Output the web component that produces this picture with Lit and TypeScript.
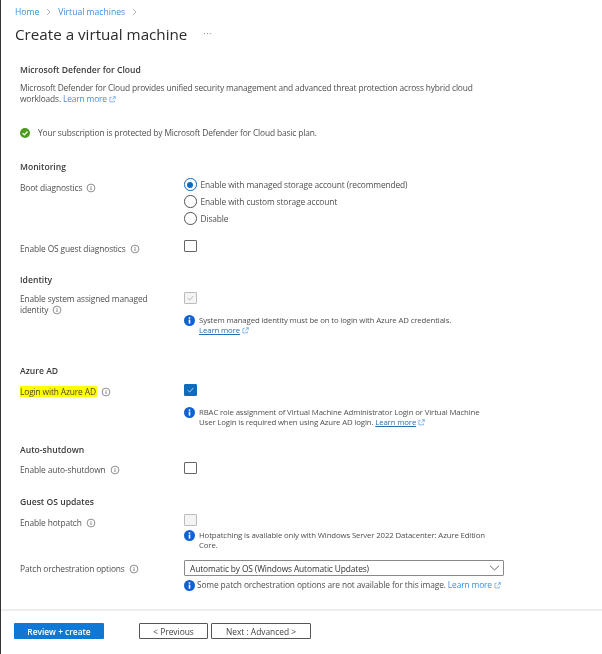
import { LitElement, html, css, svg } from "lit";
import { customElement } from "lit/decorators.js";

const info = html`<svg class="inf" viewBox="0 0 10 10"><circle cx="5" cy="5" r="3.9" fill="none" stroke="#605e5c" stroke-width=".7"/><rect x="4.6" y="4.4" width=".8" height="2.6" fill="#605e5c"/><rect x="4.6" y="3" width=".8" height=".8" fill="#605e5c"/></svg>`;
const ext = html`<svg class="ext" viewBox="0 0 8 8"><path d="M3 1.5H1v5.2h5.2V5M4.6.8h2.6v2.6M7.2.8 3.8 4.2" fill="none" stroke="currentColor" stroke-width=".7"/></svg>`;
const binfo = html`<svg class="binf" viewBox="0 0 11 11"><circle cx="5.5" cy="5.5" r="5.5" fill="#0f62d6"/><rect x="4.7" y="4.6" width="1.6" height="4" fill="#fff"/><rect x="4.7" y="2.3" width="1.6" height="1.5" fill="#fff"/></svg>`;
const check = svg`<path d="M2.6 6.2 4.9 8.4 9.4 3.6" fill="none" stroke="currentColor" stroke-width=".8"/>`;
const chev = html`<svg class="chev" viewBox="0 0 5 8"><path d="M1 1 4 4 1 7" fill="none" stroke="#999" stroke-width=".7"/></svg>`;

@customElement("app-root")
export class AppRoot extends LitElement {
  static styles = css`
    :host { display: block; width: 602px; height: 654px; box-sizing: border-box; background: #fff; border-left: 1px solid #333; overflow: hidden;
      font-family: "Open Sans", "Noto Sans", sans-serif; font-size: 8.4px; line-height: 11px; letter-spacing: -.13px; color: #4f4f4f; filter: blur(.25px); }
    .crumb { display: flex; align-items: center; gap: 5px; height: 12px; padding: 6px 0 0 14px; color: #3f8fdc; font-size: 8.6px; letter-spacing: 0; }
    .chev { width: 5px; height: 8px; margin: 0 2px; }
    .title { display: flex; align-items: center; height: 22px; margin: 5px 0 0 14px; font-size: 15.2px; letter-spacing: 0; color: #2b2b2b; font-weight: 400; }
    .title span { margin-left: 16px; color: #777; font-size: 9px; position: relative; top: -1px; letter-spacing: .5px; }
    .main { padding-left: 19px; }
    h3 { margin: 0; font-size: 8.6px; line-height: 11px; font-weight: 600; color: #3a3a3a; letter-spacing: 0; }
    a { color: #3f8fdc; text-decoration: none; }
    a.u { color: #2a6fb0; text-decoration: underline; }
    .ext { width: 7px; height: 7px; margin-left: 2px; vertical-align: -0.5px; }
    .inf { width: 10px; height: 10px; margin-left: 4px; vertical-align: -2px; }
    .binf { width: 11px; height: 11px; flex: none; }
    .desc { margin: 6px 0 0; width: 460px; letter-spacing: -.15px; }
    .status { display: flex; align-items: center; gap: 8px; margin-top: 23px; height: 11px; }
    .status svg { width: 10px; height: 10px; }
    .row { display: grid; grid-template-columns: 164px 330px; }
    .note { display: flex; gap: 4px; width: 302px; line-height: 10px; font-size: 7.8px; }
    .note.tight { width: 330px; gap: 2px; font-size: 8.4px; }
    .radio { display: flex; align-items: center; gap: 4px; height: 17px; }
    .dot { width: 12.5px; height: 12.5px; box-sizing: border-box; border-radius: 50%; border: 1px solid #555; flex: none; }
    .dot.on { border-color: #0f6cbd; display: flex; align-items: center; justify-content: center; }
    .dot.on::after { content: ""; width: 6px; height: 6px; border-radius: 50%; background: #0f6cbd; }
    .box { width: 13px; height: 12px; box-sizing: border-box; border: 1px solid #666; border-radius: 1px; display: block; background: #fff; }
    .box svg { width: 11px; height: 10px; display: block; color: #999; }
    .box.dis { border-color: #bbb; background: #f4f4f4; }
    .box.on { background: #0f6cbd; border-color: #0f6cbd; }
    .box.on svg { color: #fff; }
    mark { background: #ffff00; color: #4a4a2a; padding-right: 1px; }
    .s-mon { margin-top: 24px; } .s-id { margin-top: 21px; } .s-ad { margin-top: 31px; } .s-auto { margin-top: 18px; } .s-guest { margin-top: 22px; }
    .select { display: flex; align-items: center; justify-content: space-between; box-sizing: border-box; width: 320px; height: 16px; border: 1px solid #8a8a8a; border-radius: 1px; padding: 0 3px 0 5px; color: #333; }
    .select svg { width: 11px; height: 6px; }
    .bar { margin-top: 18px; border-top: 2px solid #eee; display: flex; padding: 12px 0 0 13px; }
    button { font: inherit; font-size: 8.4px; height: 16px; padding: 0; box-sizing: border-box; border-radius: 1px; }
    .pri { width: 90px; background: #0f78d4; border: 0; color: #fff; font-weight: 600; margin-right: 35px; }
    .sec { background: #fff; border: 1px solid #555; color: #444; margin-right: 3px; }
    .prev { width: 69px; } .next { width: 100px; }
    .mt7 { margin-top: 7px; } .mt8 { margin-top: 8px; } .mt9 { margin-top: 9px; } .mt10 { margin-top: 10px; } .mt13 { margin-top: 13px; }
    .pt2 { padding-top: 2px; } .pt3 { padding-top: 3px; } .narrow { width: 140px; }
    .up1 { margin-top: -1px; } .up2 { margin-top: -2px; } .up3 { margin-top: -3px; } .up4 { margin-top: -4px; }
    .n4 { margin-top: 4px; } .n11 { margin-top: 11px; }
    .first { margin-top: 20px; }
  `;

  render() {
    return html`
      <div class="crumb"><span>Home</span>${chev}<span>Virtual machines</span>${chev}</div>
      <div class="title">Create a virtual machine<span>···</span></div>
      <div class="main">
        <h3 class="first">Microsoft Defender for Cloud</h3>
        <p class="desc">Microsoft Defender for Cloud provides unified security management and advanced threat protection across hybrid cloud workloads. <a href="#">Learn more${ext}</a></p>
        <div class="status"><svg viewBox="0 0 10 10"><circle cx="5" cy="5" r="5" fill="#4c9a1e"/><path d="M2.6 5.2 4.3 6.9 7.5 3.5" fill="none" stroke="#fff" stroke-width="1.2"/></svg>Your subscription is protected by Microsoft Defender for Cloud basic plan.</div>

        <h3 class="s-mon">Monitoring</h3>
        <div class="row mt7">
          <div class="pt2">Boot diagnostics${info}</div>
          <div class="up4">
            <div class="radio"><span class="dot on"></span>Enable with managed storage account (recommended)</div>
            <div class="radio"><span class="dot"></span>Enable with custom storage account</div>
            <div class="radio"><span class="dot"></span>Disable</div>
          </div>
        </div>
        <div class="row mt13">
          <div class="pt3">Enable OS guest diagnostics${info}</div>
          <span class="box"></span>
        </div>

        <h3 class="s-id">Identity</h3>
        <div class="row mt7">
          <div class="narrow">Enable system assigned managed identity${info}</div>
          <div>
            <span class="box dis up1"><svg viewBox="0 0 12 12">${check}</svg></span>
            <div class="note n11">${binfo}<div>System managed identity must be on to login with Azure AD credentials.<br><a class="u" href="#">Learn more</a><a href="#">${ext}</a></div></div>
          </div>
        </div>

        <h3 class="s-ad">Azure AD</h3>
        <div class="row mt9">
          <div><mark>Login with Azure AD</mark>${info}</div>
          <div>
            <span class="box on up2"><svg viewBox="0 0 12 12">${check}</svg></span>
            <div class="note n11">${binfo}<div>RBAC role assignment of Virtual Machine Administrator Login or Virtual Machine User Login is required when using Azure AD login. <a class="u" href="#">Learn more</a><a href="#">${ext}</a></div></div>
          </div>
        </div>

        <h3 class="s-auto">Auto-shutdown</h3>
        <div class="row mt8">
          <div>Enable auto-shutdown${info}</div>
          <span class="box up2"></span>
        </div>

        <h3 class="s-guest">Guest OS updates</h3>
        <div class="row mt9">
          <div>Enable hotpatch${info}</div>
          <div>
            <span class="box dis up3"></span>
            <div class="note n4">${binfo}<div>Hotpatching is available only with Windows Server 2022 Datacenter: Azure Edition Core.</div></div>
          </div>
        </div>
        <div class="row mt10">
          <div class="pt3">Patch orchestration options${info}</div>
          <div>
            <div class="select">Automatic by OS (Windows Automatic Updates)<svg viewBox="0 0 11 6"><path d="M1 .8 5.5 5 10 .8" fill="none" stroke="#444" stroke-width=".8"/></svg></div>
            <div class="note tight n4">${binfo}<div>Some patch orchestration options are not available for this image. <a href="#">Learn more${ext}</a></div></div>
          </div>
        </div>
      </div>
      <div class="bar">
        <button class="pri">Review + create</button>
        <button class="sec prev">&lt; Previous</button>
        <button class="sec next">Next : Advanced &gt;</button>
      </div>
    `;
  }
}
